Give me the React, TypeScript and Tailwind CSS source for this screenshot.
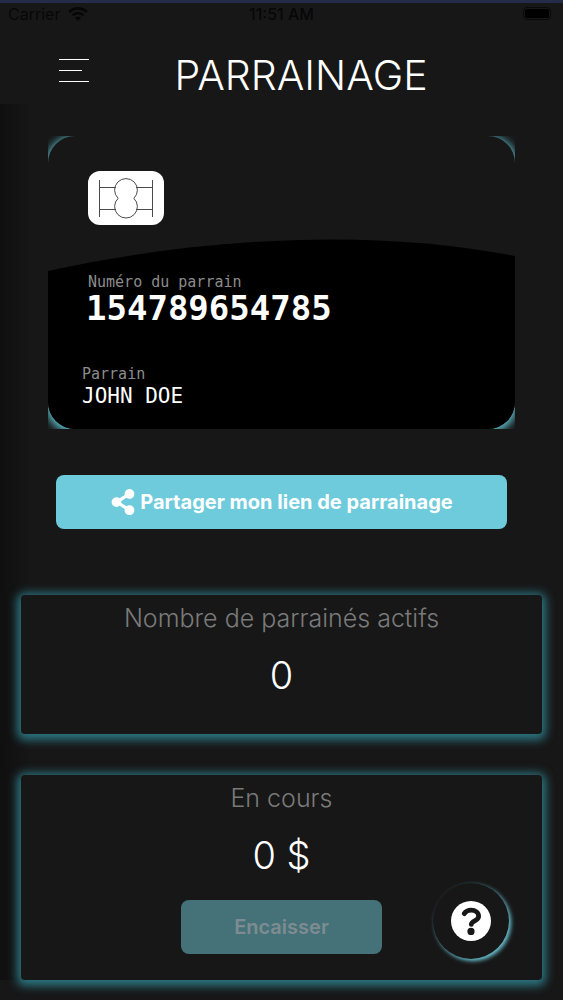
import React, { useState } from 'react';
import { FaShareAlt } from 'react-icons/fa';

interface SponsorCardProps {
    number: string;
    name: string;
}

interface StatPanelProps {
    label: string;
    value: string;
    children?: React.ReactNode;
}

function StatusBar() {
    return (
        <div className="relative flex h-6 items-center justify-between border-t-[3px] border-[#252b4a] px-2 text-base leading-none text-black/70">
            <div className="flex items-center gap-2">
                <span>Carrier</span>
                <svg width="20" height="14" viewBox="0 0 20 14" fill="none" stroke="currentColor" strokeWidth="2.6">
                    <path d="M1.2 5A12.4 12.4 0 0 1 18.8 5" />
                    <path d="M4.4 8.4A8 8 0 0 1 15.6 8.4" />
                    <path d="M10 14L6.8 10.8A4.5 4.5 0 0 1 13.2 10.8Z" fill="currentColor" stroke="none" />
                </svg>
            </div>
            <span className="absolute inset-x-0 text-center font-medium">11:51 AM</span>
            <div className="mr-1 rounded-[4px] border border-black/60 p-px">
                <div className="h-[9px] w-6 rounded-[2px] bg-black" />
            </div>
        </div>
    );
}

function Chip() {
    return (
        <svg width="76" height="54" viewBox="0 0 76 54" fill="none" stroke="#4b4b4b" className="block rounded-xl bg-white">
            <path d="M11.5 9V46M64.5 9V46M11.5 16.5H28M48 16.5H64.5M11.5 38.5H28M48 38.5H64.5" />
            <path d="M30.2 27.3A11.4 11.4 0 1 1 45.8 27.3A11.4 11.4 0 1 1 30.2 27.3Z" />
        </svg>
    );
}

function HelpIcon() {
    return (
        <svg width="40" height="40" viewBox="0 0 40 40">
            <circle cx="20" cy="20" r="20" fill="#fff" />
            <path
                d="M13.2 12.6C14.8 10.2 17 9.1 20 9.1C24.4 9.1 27.6 11.5 27.6 15.2C27.6 19.9 20.3 19.6 20.3 23.4"
                fill="none"
                stroke="#171717"
                strokeWidth="4.8"
                strokeLinecap="round"
                strokeLinejoin="round"
            />
            <circle cx="20" cy="30.4" r="3.6" fill="#171717" />
        </svg>
    );
}

function SponsorCard({ number, name }: SponsorCardProps) {
    return (
        <section className="overflow-hidden font-['DejaVu_Sans_Mono',monospace]">
            <div className="relative h-[293px] overflow-hidden rounded-[27px] bg-[#171717] shadow-[0_2px_8px_2px_#5fc4d3]">
                <svg className="absolute inset-0 h-full w-full" viewBox="0 0 467 293" preserveAspectRatio="none">
                    <path d="M0 135C155 101 325 92 467 120V293H0Z" fill="#000" />
                </svg>
                <div className="relative pl-[38px] pt-[35px]">
                    <div className="pl-0.5">
                        <Chip />
                        <p className="mt-[49px] text-[15px] leading-4 text-[#8c8c8c]">Numéro du parrain</p>
                    </div>
                    <p className="text-[34px] font-bold leading-9 text-white">{number}</p>
                </div>
                <div className="relative pl-[34px] pt-[38px]">
                    <p className="text-[15px] leading-5 text-[#8c8c8c]">Parrain</p>
                    <p className="text-[21px] leading-6 text-white">{name}</p>
                </div>
            </div>
        </section>
    );
}

function StatPanel({ label, value, children }: StatPanelProps) {
    return (
        <section className="flex flex-col items-center rounded bg-[#171717] pt-[7px] shadow-[0_2px_10px_4px_#2b7580]">
            <h2 className="text-[25px] font-light leading-8 text-[#7a7a7a]">{label}</h2>
            <p className="mt-4 text-[38px] font-light leading-[50px] text-white">{value}</p>
            {children}
        </section>
    );
}

export default function App() {
    const [menuOpen, setMenuOpen] = useState(false);

    return (
        <div className="relative min-h-screen bg-[#171717] pb-5 font-[Inter,sans-serif]">
            <StatusBar />

            <header className="flex h-20 items-center pl-[59px] pr-[50px] pt-[22px]">
                <button
                    aria-label="Menu"
                    aria-expanded={menuOpen}
                    onClick={() => setMenuOpen(!menuOpen)}
                    className="flex flex-col gap-[10px] pb-[10px]"
                >
                    <span className="h-px w-[30px] bg-white" />
                    <span className="h-px w-[23px] bg-white" />
                    <span className="h-px w-[30px] bg-white" />
                </button>
                <h1 className="flex-1 text-center text-[41px] font-light leading-none text-white">PARRAINAGE</h1>
            </header>

            <main className="bg-linear-to-r from-[#0f0f0f] to-[#171717] to-[32px] pt-8">
                <div className="px-12">
                    <SponsorCard number="154789654785" name="JOHN DOE" />
                </div>

                <div className="mt-[46px] px-14">
                    <button className="flex h-[54px] w-full items-center justify-center gap-1 rounded-lg bg-[#6ecbdc] text-xl font-bold text-white">
                        <FaShareAlt size={26} />
                        Partager mon lien de parrainage
                    </button>
                </div>

                <div className="mt-[66px] flex flex-col gap-[41px] px-[21px]">
                    <StatPanel label="Nombre de parrainés actifs" value="0">
                        <div className="h-[34px]" />
                    </StatPanel>
                    <StatPanel label="En cours" value="0 $">
                        <button
                            disabled
                            className="mb-[26px] mt-5 h-[54px] w-[201px] rounded-lg bg-[#447278] text-xl font-semibold text-[#7e8c91]"
                        >
                            Encaisser
                        </button>
                    </StatPanel>
                </div>
            </main>

            <button
                aria-label="Aide"
                className="absolute bottom-[41px] right-[54px] flex size-[76px] items-center justify-center rounded-full bg-[#171717] shadow-[2px_2px_4px_#6ecbdc]"
            >
                <HelpIcon />
            </button>
        </div>
    );
}
